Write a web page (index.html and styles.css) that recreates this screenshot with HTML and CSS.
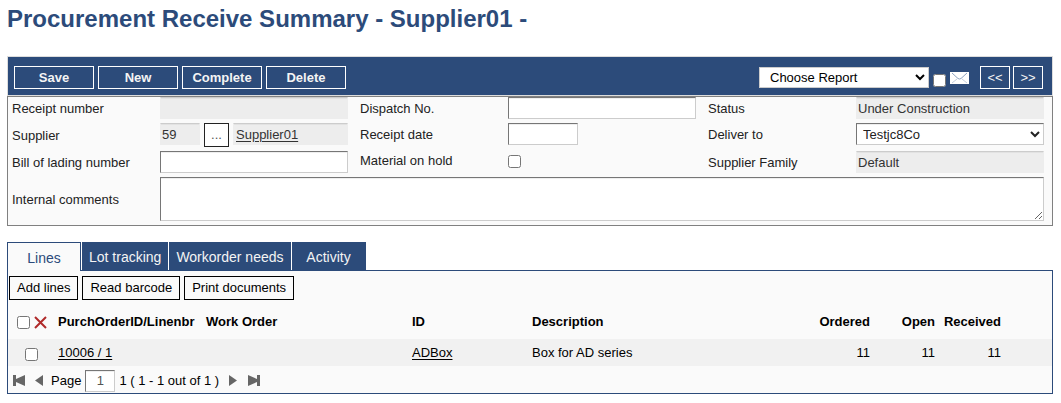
FILE: index.html
```html
<!DOCTYPE html>
<html lang="en">
<head>
<meta charset="utf-8">
<title>Procurement Receive Summary</title>
<link rel="stylesheet" href="styles.css">
</head>
<body>
<h1 class="title">Procurement Receive Summary - Supplier01 -</h1>

<div class="toolbar">
  <button class="tool-btn" type="button">Save</button>
  <button class="tool-btn" type="button">New</button>
  <button class="tool-btn" type="button">Complete</button>
  <button class="tool-btn" type="button">Delete</button>
  <div class="report">
    <select class="report-select" aria-label="Report"><option>Choose Report</option></select>
    <input class="check" type="checkbox" aria-label="Send report by mail">
    <svg class="mail" width="19" height="12" viewBox="0 0 19 12" aria-hidden="true">
      <rect width="19" height="12" fill="#fff"/>
      <path d="M2 11l5-4M17 11l-5-4" fill="none" stroke="#c3cede"/>
      <path d="M2 1l6 5.500q1.500 1 3 0L17 1" fill="none" stroke="#8da2c0"/>
    </svg>
  </div>
  <div class="steps">
    <button class="tool-btn step" type="button" aria-label="Previous receipt">&lt;&lt;</button>
    <button class="tool-btn step" type="button" aria-label="Next receipt">&gt;&gt;</button>
  </div>
</div>

<form class="form">
  <div class="columns">
    <div class="column">
      <div class="row">
        <label class="label" for="receipt">Receipt number</label>
        <input class="field readonly" id="receipt" readonly>
      </div>
      <div class="row">
        <label class="label" for="supplier">Supplier</label>
        <div class="lookup">
          <input class="field readonly code" id="supplier" value="59" readonly>
          <button class="lookup-btn" type="button" aria-label="Find supplier">...</button>
          <div class="field readonly name"><a class="link" href="#">Supplier01</a></div>
        </div>
      </div>
      <div class="row">
        <label class="label" for="lading">Bill of lading number</label>
        <input class="field" id="lading">
      </div>
    </div>
    <div class="column">
      <div class="row">
        <label class="label" for="dispatch">Dispatch No.</label>
        <input class="field" id="dispatch">
      </div>
      <div class="row">
        <label class="label" for="date">Receipt date</label>
        <input class="field date" id="date">
      </div>
      <div class="row">
        <label class="label" for="hold">Material on hold</label>
        <input class="check hold" id="hold" type="checkbox">
      </div>
    </div>
    <div class="column">
      <div class="row">
        <label class="label" for="status">Status</label>
        <input class="field readonly" id="status" value="Under Construction" readonly>
      </div>
      <div class="row spaced">
        <label class="label" for="deliver">Deliver to</label>
        <select class="field" id="deliver"><option>Testjc8Co</option></select>
      </div>
      <div class="row">
        <label class="label" for="family">Supplier Family</label>
        <input class="field readonly" id="family" value="Default" readonly>
      </div>
    </div>
  </div>
  <div class="row">
    <label class="label" for="comments">Internal comments</label>
    <textarea class="field comments" id="comments"></textarea>
  </div>
</form>

<div class="tabs" role="tablist">
  <button class="tab active" type="button" role="tab" aria-selected="true">Lines</button>
  <button class="tab" type="button" role="tab">Lot tracking</button>
  <button class="tab" type="button" role="tab">Workorder needs</button>
  <button class="tab" type="button" role="tab">Activity</button>
</div>

<section class="panel">
  <div class="actions">
    <button class="action" type="button">Add lines</button>
    <button class="action" type="button">Read barcode</button>
    <button class="action" type="button">Print documents</button>
  </div>
  <table class="lines">
    <colgroup>
      <col class="c-check"><col class="c-order"><col class="c-work"><col class="c-id"><col class="c-desc"><col class="c-ordered"><col class="c-open"><col class="c-received"><col class="c-end">
    </colgroup>
    <thead>
      <tr>
        <th>
          <div class="select-all">
            <input class="check" type="checkbox" aria-label="Select all lines">
            <svg width="13" height="13" viewBox="0 0 13 13" aria-hidden="true"><path d="M1 1l11 11M12 1L1 12" stroke="#b02a2a" stroke-width="2"/></svg>
          </div>
        </th>
        <th>PurchOrderID/Linenbr</th>
        <th>Work Order</th>
        <th>ID</th>
        <th>Description</th>
        <th class="num">Ordered</th>
        <th class="num">Open</th>
        <th class="num">Received</th>
        <th></th>
      </tr>
    </thead>
    <tbody>
      <tr>
        <td><div class="select-one"><input class="check" type="checkbox" aria-label="Select line 10006 / 1"></div></td>
        <td><a class="link" href="#">10006 / 1</a></td>
        <td></td>
        <td><a class="link" href="#">ADBox</a></td>
        <td>Box for AD series</td>
        <td class="num">11</td>
        <td class="num">11</td>
        <td class="num">11</td>
        <td></td>
      </tr>
    </tbody>
  </table>
  <div class="pager">
    <button class="page-btn" type="button" aria-label="First page"><svg width="13" height="11" viewBox="0 0 13 11"><path d="M0 0h3v4l9-4v11l-9-4v4H0z" fill="#666"/></svg></button>
    <button class="page-btn prev" type="button" aria-label="Previous page"><svg width="8" height="11" viewBox="0 0 8 11"><path d="M8 0v11L0 5.500z" fill="#666"/></svg></button>
    <label for="page">Page</label>
    <input class="field page" id="page" value="1">
    <span>1 ( 1 - 1 out of 1 )</span>
    <button class="page-btn next" type="button" aria-label="Next page"><svg width="8" height="11" viewBox="0 0 8 11"><path d="M0 0v11l8-5.500z" fill="#666"/></svg></button>
    <button class="page-btn last" type="button" aria-label="Last page"><svg width="13" height="11" viewBox="0 0 13 11"><path d="M13 0h-3v4L1 0v11l9-4v4h3z" fill="#666"/></svg></button>
  </div>
</section>
</body>
</html>
```

FILE: styles.css
```css
* {
  box-sizing: border-box;
}

body {
  margin: 0;
  padding: 4px 8px 0 7px;
  background: #fff;
  color: #222;
  font: 13px/16px "Liberation Sans", Arial, sans-serif;
}

button,
input,
select,
textarea {
  margin: 0;
  font: inherit;
  color: inherit;
}

.title {
  margin: 0 0 22px;
  color: #2c4b7a;
  font-size: 24px;
  line-height: 30px;
}

.toolbar {
  display: flex;
  align-items: center;
  gap: 4px;
  height: 40px;
  padding: 3px 9px 0 6px;
  border: 1px solid #ddd;
  background: #2c4b7a;
}

.tool-btn {
  width: 80px;
  height: 23px;
  padding: 0;
  border: 1px solid #fff;
  background: transparent;
  color: #f4f4f4;
  font-weight: bold;
}

.step {
  width: 30px;
  font-weight: normal;
}

.report {
  display: flex;
  align-items: center;
  gap: 4px;
  margin-left: auto;
}

.report-select {
  width: 170px;
  height: 21px;
  padding: 0 0 0 6px;
  border: 1px solid #ccc;
  border-radius: 0;
  background: #fff;
  color: #000;
}

.report .check {
  margin-top: 5px;
}

.steps {
  display: flex;
  gap: 3px;
  margin-left: 7px;
}

.check {
  flex: none;
  width: 13px;
  height: 13px;
}

.hold {
  margin-top: 2px;
}

.form {
  padding: 0 8px 0 4px;
  border: 1px solid #808080;
  background: #fafafa;
}

.columns {
  display: grid;
  grid-template-columns: repeat(3, 1fr);
  gap: 12px;
}

.row {
  display: flex;
  align-items: center;
  min-height: 26px;
  padding-bottom: 4px;
}

.spaced {
  padding-bottom: 6px;
}

.label {
  flex: none;
  width: 148px;
  padding-top: 2px;
}

.field {
  flex: 1;
  min-width: 0;
  height: 22px;
  padding: 0 2px;
  border: 1px solid #ccc;
  border-top-color: #767676;
  border-left-color: #767676;
  border-radius: 0;
  outline: 0;
  background: #fff;
  box-shadow: inset 0 1px #eee;
}

.readonly {
  padding: 0 1px;
  border-color: #ccc #ededed #ededed;
  background: #ededed;
  box-shadow: inset 0 1px #e2e2e2;
  color: #333;
}

.date {
  flex: 0 0 70px;
}

.comments {
  height: 44px;
}

.lookup {
  display: flex;
  flex: 1;
  align-items: flex-start;
  gap: 4px;
}

.code {
  flex: 0 0 40px;
}

.lookup-btn {
  width: 25px;
  height: 24px;
  padding: 0;
  border: 1px solid #222;
  background: #fff;
  color: #555;
}

.name {
  padding-left: 2px;
  line-height: 22px;
}

.link {
  color: inherit;
  text-underline-offset: 2px;
}

.tabs {
  display: flex;
  gap: 1px;
  margin-top: 16px;
}

.tab {
  min-width: 74px;
  height: 28px;
  padding: 2px 7px 0;
  border: 0;
  background: #2c4b7a;
  color: #f4f4f4;
  font-size: 14px;
}

.active {
  position: relative;
  z-index: 1;
  height: 29px;
  margin-bottom: -1px;
  border: 1px solid #2c4b7a;
  border-bottom: 0;
  background: #fafafa;
  color: #2c4b7a;
}

.panel {
  padding-top: 5px;
  border: 1px solid #2c4b7a;
  background: #fafafa;
  color: #000;
}

.actions {
  display: flex;
  gap: 4px;
  padding-left: 1px;
}

.action {
  height: 24px;
  padding: 0 7px;
  border: 1px solid #000;
  background: #fafafa;
}

.lines {
  width: 100%;
  margin-top: 3px;
  border-collapse: collapse;
  table-layout: fixed;
}

.lines th,
.lines td {
  padding: 0;
  text-align: left;
  white-space: nowrap;
}

.lines th {
  height: 36px;
  padding-top: 2px;
}

.lines td {
  height: 27px;
  background: #f1f1f1;
}

.lines .num {
  text-align: right;
}

.c-check {
  width: 50px;
}

.c-order {
  width: 148px;
}

.c-work {
  width: 206px;
}

.c-id {
  width: 120px;
}

.c-ordered {
  width: 65px;
}

.c-open {
  width: 65px;
}

.c-received {
  width: 66px;
}

.c-end {
  width: 51px;
}

.select-all {
  display: flex;
  align-items: center;
  gap: 4px;
  padding-left: 9px;
}

.select-one {
  display: flex;
  padding: 3px 0 0 17px;
}

.pager {
  display: flex;
  align-items: center;
  gap: 4px;
  height: 27px;
  padding: 2px 0 0 5px;
}

.page-btn {
  display: flex;
  padding: 0;
  border: 0;
  background: transparent;
}

.prev {
  margin: 0 4px 0 5px;
}

.next {
  margin-left: 6px;
}

.last {
  margin-left: 6px;
}

.page {
  flex: 0 0 30px;
  color: #555;
  text-align: center;
}
```
